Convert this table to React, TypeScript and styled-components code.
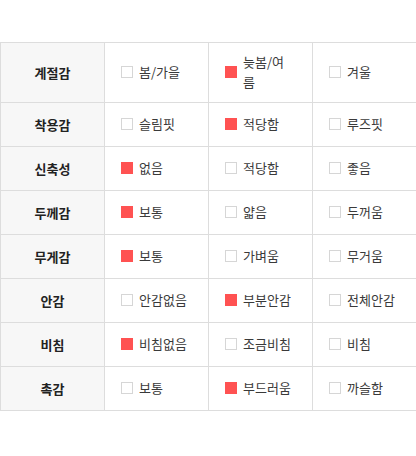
import React from 'react'
import styled, { createGlobalStyle } from 'styled-components'

const GlobalStyle = createGlobalStyle`
  html, body {
    margin: 0;
    padding: 0;
    background: #ffffff;
    overflow-x: hidden;
  }
  body {
    font-family: "Noto Sans CJK KR", "Noto Sans", sans-serif;
    -webkit-font-smoothing: antialiased;
  }
`

const Page = styled.div`
  padding-top: 42px;
  width: 417px;
`

const Grid = styled.div`
  display: grid;
  grid-template-columns: repeat(4, 104px);
  border-top: 1px solid #dddddd;
  border-left: 1px solid #dddddd;
`

const Cell = styled.div`
  box-sizing: border-box;
  min-height: 44px;
  border-right: 1px solid #dddddd;
  border-bottom: 1px solid #dddddd;
  display: flex;
  align-items: center;
`

const LabelCell = styled(Cell)`
  background: #f7f7f7;
  justify-content: center;
  font-size: 13px;
  font-weight: 700;
  color: #222222;
`

const OptionCell = styled(Cell)`
  padding: 9px 18px 10px 16px;
  gap: 6px;
  font-size: 13px;
  color: #3a3a3a;
`

const Box = styled.span<{ $checked: boolean }>`
  flex: none;
  box-sizing: border-box;
  width: 12px;
  height: 12px;
  background: ${({ $checked }) => ($checked ? '#ff5252' : '#ffffff')};
  border: 1px solid ${({ $checked }) => ($checked ? '#ff5252' : '#d6d6d6')};
`

const OptionText = styled.span`
  line-height: 20px;
  min-width: 0;
`

type Row = {
  label: string
  options: string[]
  selected: number
}

const rows: Row[] = [
  { label: '계절감', options: ['봄/가을', '늦봄/여름', '겨울'], selected: 1 },
  { label: '착용감', options: ['슬림핏', '적당함', '루즈핏'], selected: 1 },
  { label: '신축성', options: ['없음', '적당함', '좋음'], selected: 0 },
  { label: '두께감', options: ['보통', '얇음', '두꺼움'], selected: 0 },
  { label: '무게감', options: ['보통', '가벼움', '무거움'], selected: 0 },
  { label: '안감', options: ['안감없음', '부분안감', '전체안감'], selected: 1 },
  { label: '비침', options: ['비침없음', '조금비침', '비침'], selected: 0 },
  { label: '촉감', options: ['보통', '부드러움', '까슬함'], selected: 1 },
]

const App: React.FC = () => {
  return (
    <>
      <GlobalStyle />
      <Page>
        <Grid>
          {rows.map((row) => (
            <React.Fragment key={row.label}>
              <LabelCell>{row.label}</LabelCell>
              {row.options.map((option, index) => (
                <OptionCell key={option + index}>
                  <Box $checked={index === row.selected} />
                  <OptionText>{option}</OptionText>
                </OptionCell>
              ))}
            </React.Fragment>
          ))}
        </Grid>
      </Page>
    </>
  )
}

export default App
